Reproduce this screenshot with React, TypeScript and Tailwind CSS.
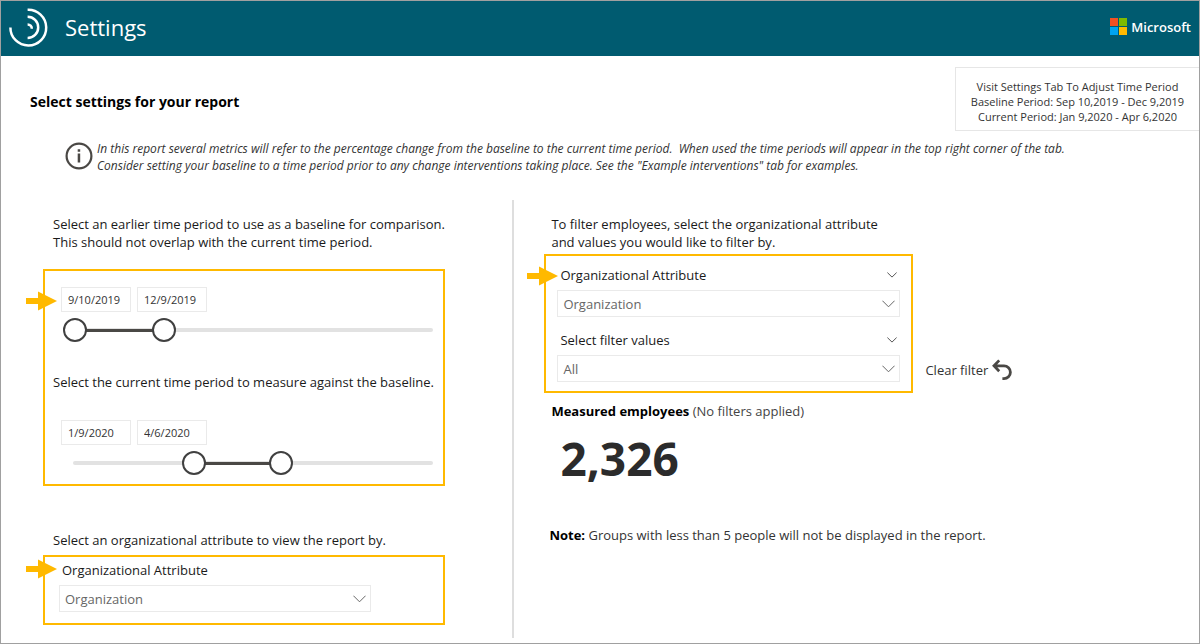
import { useId, useState } from "react";

const DAY_MS = 86400000;
const FIRST_DAY = Date.UTC(2019, 8, 10);
const LAST_OFFSET = 351;

function formatDay(offset: number) {
  const d = new Date(FIRST_DAY + offset * DAY_MS);
  return `${d.getUTCMonth() + 1}/${d.getUTCDate()}/${d.getUTCFullYear()}`;
}

function BrandMark() {
  return (
    <svg width="40" height="40" viewBox="0 0 40 40" fill="none" stroke="#fff" strokeWidth="2.5" aria-hidden="true">
      <path d="M18.6 2.7A17.9 17.9 0 1 1 1.4 20.4" />
      <path d="M18.6 9.8A10.6 10.6 0 1 1 18.6 31" />
      <path d="M18.6 17.4A4.2 4.2 0 0 1 22.8 21.8" />
    </svg>
  );
}

function MicrosoftMark() {
  return (
    <svg width="17" height="17" viewBox="0 0 17 17" aria-hidden="true">
      <path fill="#f25022" d="M0 0h8v8H0z" />
      <path fill="#7fba00" d="M9 0h8v8H9z" />
      <path fill="#00a4ef" d="M0 9h8v8H0z" />
      <path fill="#ffb900" d="M9 9h8v8H9z" />
    </svg>
  );
}

function Pointer() {
  return (
    <svg width="31" height="20" viewBox="0 0 31 20" fill="#ffb900" aria-hidden="true" className="absolute -left-[19px] top-5">
      <path d="M0 7h12V0.5L31 10 12 19.5V13H0z" />
    </svg>
  );
}

function Chevron({ size }: { size: "sm" | "lg" }) {
  return size === "sm" ? (
    <svg width="10" height="6" viewBox="0 0 10 6" fill="none" stroke="#555" aria-hidden="true">
      <path d="M0.4 0.6 5 5.1 9.6 0.6" />
    </svg>
  ) : (
    <svg width="13" height="8" viewBox="0 0 13 8" fill="none" stroke="#666" aria-hidden="true">
      <path d="M0.4 0.7 6.5 6.8 12.6 0.7" />
    </svg>
  );
}

function Dropdown({ id, options }: { id: string; options: string[] }) {
  return (
    <div className="relative">
      <select
        id={id}
        className="block h-[27px] w-full appearance-none border border-[#eaeaea] bg-white pl-[5px] pr-7 pt-px text-[13px] text-[#666]"
      >
        {options.map((o) => (
          <option key={o}>{o}</option>
        ))}
      </select>
      <span className="pointer-events-none absolute inset-y-0 right-[5px] flex items-center">
        <Chevron size="lg" />
      </span>
    </div>
  );
}

const thumb =
  "pointer-events-none absolute inset-0 m-0 h-6 w-full appearance-none bg-transparent [&::-webkit-slider-thumb]:pointer-events-auto [&::-webkit-slider-thumb]:size-6 [&::-webkit-slider-thumb]:appearance-none [&::-webkit-slider-thumb]:rounded-full [&::-webkit-slider-thumb]:border-2 [&::-webkit-slider-thumb]:border-solid [&::-webkit-slider-thumb]:border-[#404040] [&::-webkit-slider-thumb]:bg-white";

function PeriodPicker({ name, initial }: { name: string; initial: [number, number] }) {
  const [[from, to], setRange] = useState(initial);
  const dateBox = "h-[25px] w-[70px] border border-[#eaeaea] bg-white px-[6px] text-[11px] text-[#333]";
  return (
    <div>
      <div className="flex gap-[6px] pl-4">
        <input className={dateBox} aria-label={`${name} start date`} value={formatDay(from)} readOnly />
        <input className={dateBox} aria-label={`${name} end date`} value={formatDay(to)} readOnly />
      </div>
      <div className="relative ml-[18px] mr-[10px] mt-[6px] h-6">
        <div className="absolute left-[10px] right-0 top-[10px] h-1 rounded-full bg-[#e2e2e2]" />
        <div className="absolute inset-x-3 top-[11px] h-[3px]">
          <div
            className="h-full bg-[#4a4845]"
            style={{
              marginLeft: `${(from / LAST_OFFSET) * 100}%`,
              width: `${((to - from) / LAST_OFFSET) * 100}%`,
            }}
          />
        </div>
        <input
          type="range"
          aria-label={`${name} start`}
          className={thumb}
          min={0}
          max={LAST_OFFSET}
          value={from}
          onChange={(e) => setRange([Math.min(+e.target.value, to), to])}
        />
        <input
          type="range"
          aria-label={`${name} end`}
          className={thumb}
          min={0}
          max={LAST_OFFSET}
          value={to}
          onChange={(e) => setRange([from, Math.max(+e.target.value, from)])}
        />
      </div>
    </div>
  );
}

function Slicer({ label, options }: { label: string; options: string[] }) {
  const id = useId();
  const [open, setOpen] = useState(true);
  return (
    <div>
      <div className="flex h-[18px] items-center justify-between pl-[3px] pr-[3px]">
        <label htmlFor={id}>{label}</label>
        <button type="button" aria-label={`Toggle ${label}`} aria-expanded={open} onClick={() => setOpen(!open)}>
          <Chevron size="sm" />
        </button>
      </div>
      {open && (
        <div className="mt-[6px]">
          <Dropdown id={id} options={options} />
        </div>
      )}
    </div>
  );
}

export default function App() {
  const viewBy = useId();
  return (
    <div className="flex min-h-screen flex-col border border-[#a0a0a0] bg-white font-['Open_Sans','Noto_Sans',sans-serif] text-[13px] leading-[18px] text-[#1a1a1a]">
      <header className="flex h-[55px] items-center justify-between bg-[#005b70] pb-1 pl-2 pr-2 text-white">
        <div className="flex items-center gap-4">
          <BrandMark />
          <h1 className="text-[22px] leading-7">Settings</h1>
        </div>
        <div className="flex items-center gap-1">
          <MicrosoftMark />
          <span className="text-[13px] font-semibold">Microsoft</span>
        </div>
      </header>

      <div className="flex items-start justify-between pl-[29px] pt-[11px]">
        <h2 className="pt-[25px] text-[14px] font-bold leading-5 text-black">Select settings for your report</h2>
        <p className="w-[244px] border border-r-0 border-[#e6e6e6] pb-[6px] pt-[11px] text-center text-[11px] leading-[15px] text-[#333]">
          Visit Settings Tab To Adjust Time Period
          <br />
          Baseline Period: Sep 10,2019 - Dec 9,2019
          <br />
          Current Period: Jan 9,2020 - Apr 6,2020
        </p>
      </div>

      <div className="flex gap-1 pl-16 pr-8 pt-[9px]">
        <svg width="28" height="28" viewBox="0 0 28 28" aria-hidden="true" className="mt-[2px] shrink-0">
          <circle cx="14" cy="14" r="12.4" fill="none" stroke="#4a4845" strokeWidth="2.2" />
          <path fill="#4a4845" d="M12.7 7.3h2.5v2.4h-2.5zM12.7 11.4h2.5v9h-2.5z" />
        </svg>
        <p className="text-[12px] italic leading-[17px] text-[#333]">
          In this report several metrics will refer to the percentage change from the baseline to the current time
          period.&nbsp; When used the time periods will appear in the top right corner of the tab.
          <br />
          Consider setting your baseline to a time period prior to any change interventions taking place. See the
          "Example interventions" tab for examples.
        </p>
      </div>

      <main className="mb-[5px] mt-[26px] grid grow grid-cols-[minmax(0,3fr)_minmax(0,4fr)]">
        <section className="border-r-2 border-[#dedede] pb-[13px] pl-[42px] pr-5 pt-[15px]">
          <p className="pl-[10px]">
            Select an earlier time period to use as a baseline for comparison.
            <br />
            This should not overlap with the current time period.
          </p>
          <div className="relative mt-[18px] max-w-[402px] border-2 border-[#ffb900] pb-[9px] pt-4">
            <Pointer />
            <PeriodPicker name="Baseline period" initial={[0, 90]} />
            <p className="mb-[29px] mt-[31px] pl-2">Select the current time period to measure against the baseline.</p>
            <PeriodPicker name="Current period" initial={[121, 209]} />
          </div>
          <p className="mt-[45px] pl-[10px]">Select an organizational attribute to view the report by.</p>
          <div className="relative mt-[6px] max-w-[402px] border-2 border-[#ffb900] pb-[11px] pl-[14px] pr-4 pt-1">
            <div className="absolute -top-[18px] left-0">
              <Pointer />
            </div>
            <label htmlFor={viewBy} className="block pl-[3px]">
              Organizational Attribute
            </label>
            <div className="mt-[6px] max-w-[312px]">
              <Dropdown id={viewBy} options={["Organization"]} />
            </div>
          </div>
        </section>

        <section className="pl-[30px] pr-5 pt-[15px]">
          <p className="pl-[7px]">
            To filter employees, select the organizational attribute
            <br />
            and values you would like to filter by.
          </p>
          <div className="mt-[3px] flex items-end gap-3">
            <div className="relative flex w-full max-w-[369px] flex-col gap-[14px] border-2 border-[#ffb900] pb-[9px] pl-[11px] pr-[11px] pt-[10px]">
              <div className="absolute -top-[10px] left-0">
                <Pointer />
              </div>
              <Slicer label="Organizational Attribute" options={["Organization"]} />
              <Slicer label="Select filter values" options={["All"]} />
            </div>
            <button type="button" className="mb-3 flex shrink-0 items-center gap-1 text-[#333]">
              Clear filter
              <svg width="20" height="22" viewBox="0 0 20 22" fill="none" stroke="#4a4845" strokeWidth="2.8" aria-hidden="true">
                <path d="M7.2 1.4 2 6.8 7.2 12.2M2.2 6.8H12a6.3 6.3 0 0 1 0 12.8H10.4" />
              </svg>
            </button>
          </div>
          <p className="mt-[9px] pl-[7px] text-[#444]">
            <strong className="text-black">Measured employees</strong> (No filters applied)
          </p>
          <p className="mt-2 pl-4 text-[46px] font-bold leading-[60px] text-[#2b2b2b]">2,326</p>
          <p className="mt-[38px] pl-[5px] text-[#333]">
            <strong className="text-black">Note:</strong> Groups with less than 5 people will not be displayed in the
            report.
          </p>
        </section>
      </main>
    </div>
  );
}
